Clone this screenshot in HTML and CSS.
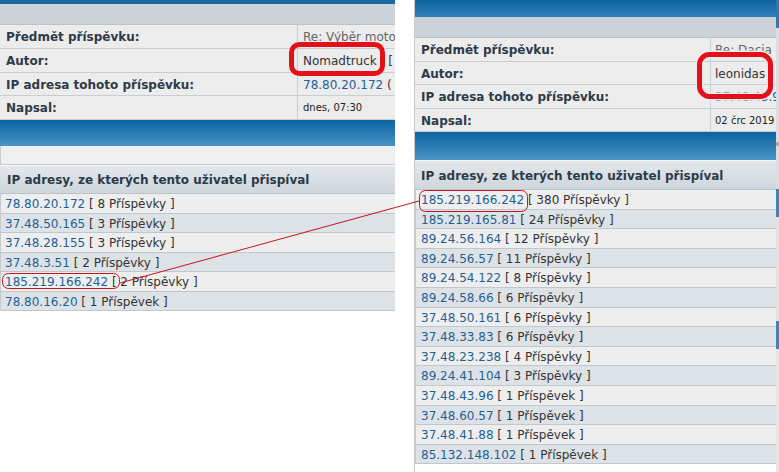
FILE: index.html
```html
<!DOCTYPE html>
<html lang="cs">
<head>
    <meta charset="UTF-8">
    <title>IP adresy uživatele</title>
    <link rel="stylesheet" href="styles.css">
</head>
<body>
    <div class="sheet">
        <section class="shot shot-left">
            <div class="bar bar-top"></div>
            <div class="band"></div>
            <div class="details">
                <div class="row"><div class="label">Předmět příspěvku:</div><div class="value muted">Re: Výběr motorky na cesty</div></div>
                <div class="row"><div class="label">Autor:</div><div class="value">Nomadtruck &nbsp;&nbsp;[ Profil ]</div></div>
                <div class="row"><div class="label">IP adresa tohoto příspěvku:</div><div class="value"><a href="#">78.80.20.172</a> ( Vyhledat )</div></div>
                <div class="row"><div class="label">Napsal:</div><div class="value small">dnes, 07:30</div></div>
            </div>
            <div class="bar bar-cat"></div>
            <div class="blank"></div>
            <div class="iphead">IP adresy, ze kterých tento uživatel přispíval</div>
            <ul class="iplist">
                <li><a href="#">78.80.20.172</a> [ 8 Příspěvky ]</li>
                <li><a href="#">37.48.50.165</a> [ 3 Příspěvky ]</li>
                <li><a href="#">37.48.28.155</a> [ 3 Příspěvky ]</li>
                <li><a href="#">37.48.3.51</a> [ 2 Příspěvky ]</li>
                <li><a href="#">185.219.166.242</a> [ 2 Příspěvky ]</li>
                <li><a href="#">78.80.16.20</a> [ 1 Příspěvek ]</li>
            </ul>
        </section>

        <section class="shot shot-right">
            <div class="bar bar-top"></div>
            <div class="band"></div>
            <div class="details">
                <div class="row"><div class="label">Předmět příspěvku:</div><div class="value muted">Re: Dacia <span class="hot">L</span></div></div>
                <div class="row"><div class="label">Autor:</div><div class="value">leonidas</div></div>
                <div class="row"><div class="label">IP adresa tohoto příspěvku:</div><div class="value"><a href="#">37.48.43.96</a></div></div>
                <div class="row"><div class="label">Napsal:</div><div class="value small">02 črc 2019 13:05</div></div>
            </div>
            <div class="bar bar-cat"></div>
            <div class="iphead">IP adresy, ze kterých tento uživatel přispíval</div>
            <ul class="iplist">
                <li><a href="#">185.219.166.242</a> [ 380 Příspěvky ]</li>
                <li><a href="#">185.219.165.81</a> [ 24 Příspěvky ]</li>
                <li><a href="#">89.24.56.164</a> [ 12 Příspěvky ]</li>
                <li><a href="#">89.24.56.57</a> [ 11 Příspěvky ]</li>
                <li><a href="#">89.24.54.122</a> [ 8 Příspěvky ]</li>
                <li><a href="#">89.24.58.66</a> [ 6 Příspěvky ]</li>
                <li><a href="#">37.48.50.161</a> [ 6 Příspěvky ]</li>
                <li><a href="#">37.48.33.83</a> [ 6 Příspěvky ]</li>
                <li><a href="#">37.48.23.238</a> [ 4 Příspěvky ]</li>
                <li><a href="#">89.24.41.104</a> [ 3 Příspěvky ]</li>
                <li><a href="#">37.48.43.96</a> [ 1 Příspěvek ]</li>
                <li><a href="#">37.48.60.57</a> [ 1 Příspěvek ]</li>
                <li><a href="#">37.48.41.88</a> [ 1 Příspěvek ]</li>
                <li><a href="#">85.132.148.102</a> [ 1 Příspěvek ]</li>
            </ul>
        </section>
        <div class="edge"></div>

        <!-- red marks drawn over both screenshots -->
        <svg class="marks" width="779" height="472" viewBox="0 0 779 472">
            <rect x="291.5" y="44.5" width="91" height="29" rx="8" fill="none" stroke="#e3101a" stroke-width="5"/>
            <rect x="699.5" y="54.5" width="71" height="42" rx="10" fill="none" stroke="#ebebeb" stroke-width="8"/>
            <rect x="699.5" y="54.5" width="71" height="42" rx="10" fill="none" stroke="#e3101a" stroke-width="5"/>
            <rect x="2.5" y="273.5" width="117" height="15" rx="6" fill="none" stroke="#c8141c" stroke-width="1"/>
            <rect x="419.5" y="190.5" width="108" height="21" rx="6" fill="none" stroke="#c8141c" stroke-width="1"/>
            <line x1="120" y1="283" x2="419" y2="201" stroke="#c8141c" stroke-width="1"/>
        </svg>
    </div>
</body>
</html>
```

FILE: styles.css
```css
body {
    margin: 0;
    background-color: #fff;
    font-family: "DejaVu Sans", Verdana, sans-serif;
    font-size: 12px;
    color: #333;
}
a {
    color: #1d6196;
    text-decoration: none;
}
.sheet {
    position: relative;
    display: flex;
    width: 779px;
    height: 472px;
    overflow: hidden;
}
.shot {
    display: flex;
    flex-direction: column;
}
.shot-left {
    width: 395px;
    margin-right: 19px;
}
.shot-right {
    flex: 1;
    border-left: 1px solid #c4ccd2;
}
.edge {
    width: 3px;
    background: linear-gradient(#2a7bb4 0 6%, #d8dde1 6% 30%, #c7a27a 30% 31%, #d8dde1 31% 40%, #3f86b8 40% 46%, #e2e2e2 46% 68%, #3f86b8 68% 74%, #e6e6e6 74%);
}
.marks {
    position: absolute;
    top: 0;
    left: 0;
    pointer-events: none;
}

/* blue bars */
.bar-top {
    height: 4px;
    background-color: #1a6aa1;
}
.shot-right .bar-top {
    height: 17px;
    background: linear-gradient(#1064a0, #2f80b9);
}
.bar-cat {
    height: 26px;
    background: linear-gradient(#0c64a0, #2f80b9 60%, #4d94c5);
}
.shot-right .bar-cat {
    height: 28px;
}
.band {
    height: 21px;
    background-color: #cbd3d9;
    border-bottom: 1px solid #b9c3cb;
    box-sizing: border-box;
}

/* post details */
.details .row {
    display: grid;
    grid-template-columns: 297px 1fr;
    height: 23.75px;
    border-bottom: 1px solid #c6cdd3;
    box-sizing: border-box;
    background-color: #ececec;
}
.shot-right .details .row {
    grid-template-columns: 295px 1fr;
    height: 23.5px;
}
.label {
    font-weight: bold;
    color: #2c3b48;
    padding: 1px 0 0 6px;
    line-height: 22px;
    white-space: nowrap;
}
.value {
    border-left: 1px solid #c6cdd3;
    padding: 1px 0 0 5px;
    line-height: 22px;
    white-space: nowrap;
    overflow: hidden;
}
.shot-right .value {
    padding-left: 4px;
}
.muted {
    color: #666;
}
.small {
    font-size: 10px;
    color: #222;
}
.hot {
    color: #d9862b;
}

/* ip list */
.blank {
    height: 19px;
    background-color: #efefef;
    border-left: 1px solid #c4ccd2;
    border-bottom: 1px solid #c4ccd2;
    box-sizing: border-box;
}
.iphead {
    height: 29px;
    line-height: 28px;
    padding-left: 7px;
    font-weight: bold;
    color: #2c3b48;
    background: linear-gradient(#e3e7eb, #cfd6dc);
    border-top: 1px solid #f4f6f7;
    border-bottom: 1px solid #b9c3cb;
    box-sizing: border-box;
    white-space: nowrap;
}
.shot-right .iphead {
    height: 30px;
    line-height: 30px;
    padding-left: 6px;
}
.iplist {
    list-style: none;
    margin: 0;
    padding: 0;
    border-left: 1px solid #c4ccd2;
}
.iplist li {
    height: 19.5px;
    line-height: 18px;
    padding: 1px 0 0 4px;
    border-bottom: 1px solid #c0c8ce;
    box-sizing: border-box;
    background-color: #eeeeee;
    white-space: nowrap;
}
.iplist li:nth-child(even) {
    background-color: #dde2e6;
}
.shot-right .iplist li {
    height: 19.6px;
    line-height: 19px;
    padding: 1px 0 0 5px;
}
```
